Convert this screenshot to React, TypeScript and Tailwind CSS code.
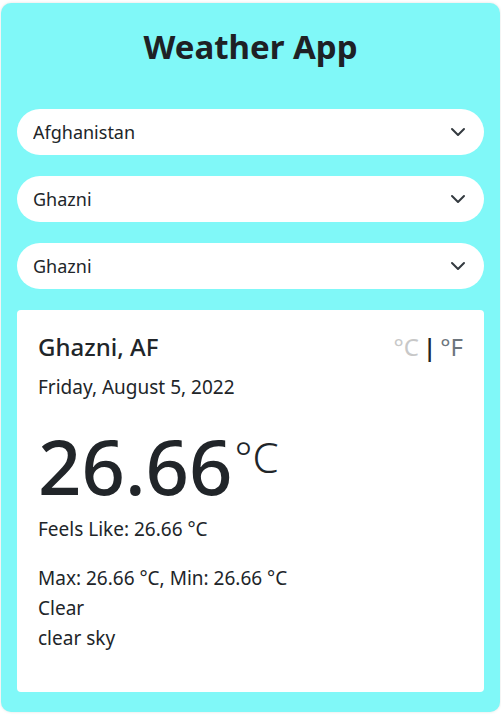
import { useState } from 'react'

const COUNTRIES = ['Afghanistan', 'Albania', 'Algeria']
const STATES = ['Ghazni', 'Kabul', 'Kandahar']
const CITIES = ['Ghazni', 'Ghazni City']

function Chevron() {
  return (
    <svg
      className="pointer-events-none absolute right-[18px] top-1/2 -translate-y-1/2"
      width="16"
      height="16"
      viewBox="0 0 16 16"
      fill="none"
      stroke="#343a40"
      strokeWidth="2"
      strokeLinecap="round"
      strokeLinejoin="round"
    >
      <path d="M2 5l6 6 6-6" />
    </svg>
  )
}

function Select({
  value,
  options,
  onChange,
}: {
  value: string
  options: string[]
  onChange: (v: string) => void
}) {
  return (
    <div className="relative">
      <select
        value={value}
        onChange={(e) => onChange(e.target.value)}
        className="w-full h-[46px] appearance-none rounded-full bg-white pl-4 pr-10 text-[18px] text-[#212529] outline-none"
      >
        {options.map((o) => (
          <option key={o} value={o}>
            {o}
          </option>
        ))}
      </select>
      <Chevron />
    </div>
  )
}

export default function App() {
  const [country, setCountry] = useState('Afghanistan')
  const [state, setState] = useState('Ghazni')
  const [city, setCity] = useState('Ghazni')
  const [unit, setUnit] = useState<'C' | 'F'>('F')

  return (
    <div
      className="min-h-screen bg-white px-[1px] pt-[3px] pb-[2px]"
      style={{ fontFamily: '"Noto Sans", "Open Sans", sans-serif' }}
    >
      <div className="rounded-[10px] bg-[#80f8f8] px-4 pt-[25px] pb-5 shadow-[0_0_3px_rgba(0,0,0,0.12)]">
        <h1 className="text-center text-[33px] leading-[38px] font-bold text-[#1e2125]">
          Weather App
        </h1>

        <div className="mt-[43px] flex flex-col gap-[21px]">
          <Select value={country} options={COUNTRIES} onChange={setCountry} />
          <Select value={state} options={STATES} onChange={setState} />
          <Select value={city} options={CITIES} onChange={setCity} />
        </div>

        <div className="mt-[21px] h-[382px] rounded-[4px] bg-white px-[21px] pt-[22px] text-[#212529]">
          <div className="flex items-center justify-between">
            <h2 className="text-[24px] leading-[29px] font-medium">Ghazni, AF</h2>
            <div className="text-[24px] leading-[29px]">
              <button
                onClick={() => setUnit('C')}
                className={unit === 'C' ? 'text-[#6c757d]' : 'text-[#c8c8c8]'}
              >
                °C
              </button>
              <span className="mx-1 font-semibold text-[#212529]">|</span>
              <button
                onClick={() => setUnit('F')}
                className={unit === 'F' ? 'text-[#6c757d]' : 'text-[#c8c8c8]'}
              >
                °F
              </button>
            </div>
          </div>

          <p className="mt-[12px] text-[19px] leading-[28px]">Friday, August 5, 2022</p>

          <div className="mt-[17px] flex items-start">
            <span className="text-[76px] leading-[96px] font-medium">26.66</span>
            <span className="mt-[14px] ml-[2px] text-[42px] leading-[50px] font-light">°C</span>
          </div>

          <p className="text-[19px] leading-[30px]">Feels Like: 26.66 °C</p>

          <div className="mt-[19px] text-[19px] leading-[30px]">
            <p>Max: 26.66 °C, Min: 26.66 °C</p>
            <p>Clear</p>
            <p>clear sky</p>
          </div>
        </div>
      </div>
    </div>
  )
}
